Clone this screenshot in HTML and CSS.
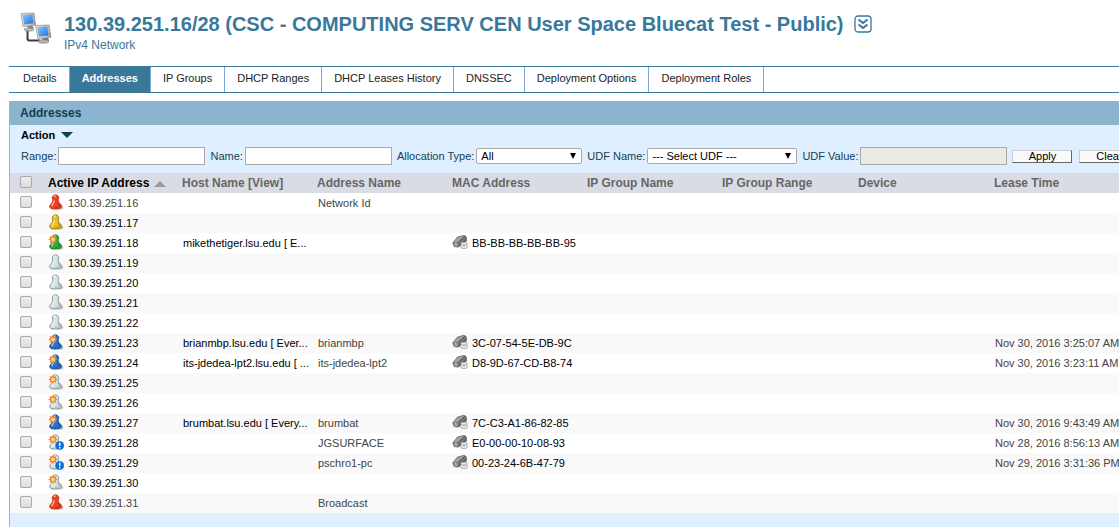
FILE: index.html
```
<!DOCTYPE html>
<html lang="en">
<head>
  <meta charset="UTF-8">
  <meta name="viewport" content="width=device-width, initial-scale=1.0">
  <title>130.39.251.16/28 - Addresses</title>
  <link rel="stylesheet" href="styles.css">
</head>
<body>
  <!-- Shared icons -->
  <svg class="sprite" width="0" height="0" aria-hidden="true">
    <defs>
      <linearGradient id="screen" x1="0" y1="0" x2="1" y2="1">
        <stop offset="0" stop-color="#8cc8fa"/>
        <stop offset="1" stop-color="#1b74dc"/>
      </linearGradient>
      <linearGradient id="metal" x1="0" y1="0" x2="1" y2="0">
        <stop offset="0" stop-color="#e4e4e4"/>
        <stop offset=".85" stop-color="#bbb"/>
        <stop offset="1" stop-color="#777"/>
      </linearGradient>
    </defs>
    <symbol id="pawn" viewBox="0 0 16 16">
      <path d="M3 15h11.500l.5-2-2.500-3.500z" fill="#000" opacity=".3"/>
      <path d="M7.500.8a3.200 3.200 0 0 1 2.600 5.100c.2 2 1.200 3.500 2.700 5.200 1 1.300.5 2.700-.8 3.200-2.900.9-6.100.9-9 0-1.300-.5-1.800-1.900-.8-3.200 1.500-1.700 2.500-3.200 2.700-5.200A3.200 3.200 0 0 1 7.500.8z" fill="currentColor" stroke-width=".9"/>
      <path d="M6 2.700q1-1.100 1.900-.4M6.300 6.300q-.3 3-2.700 5.700" fill="none" stroke="#fff" stroke-width="1.400" opacity=".65"/>
      <path d="M10 8.500q.6 2 1.800 3.700-1.500 1.200-4.800 1.200" fill="none" stroke="#000" stroke-width="1.200" opacity=".18"/>
    </symbol>
    <symbol id="spark" viewBox="0 0 16 16">
      <path d="M5 .8l1.100 1.900 2.200-.6-.6 2.200 1.900 1.100-1.900 1.100.6 2.200-2.200-.6L5 10 3.900 8.100l-2.200.6.6-2.200L.4 5.400l1.900-1.100-.6-2.200 2.200.6z" fill="#f27a35"/>
      <circle cx="5" cy="5.400" r="2" fill="#ffd95c"/>
    </symbol>
    <symbol id="alert" viewBox="0 0 16 16">
      <circle cx="11.700" cy="11.500" r="4.100" fill="#0870d8" stroke="#0758ab" stroke-width=".4"/>
      <path d="M11.700 8.800v3.200M11.700 13v1.400" stroke="#fff" stroke-width="1.500"/>
    </symbol>
    <symbol id="nic" viewBox="0 0 16 15">
      <path d="M.7 8.200L5.500 2.500 12 .8l2.500 1.700v4L6 12.700l-4-.7z" fill="#777" stroke="#5c5c5c" stroke-width=".6"/>
      <path d="M1 8l5-5 7-1.700L6.500 7.500z" fill="#a0a0a0"/>
      <path d="M6.500 7.500l7-6M6 12l8-7" stroke="#4c4c4c" stroke-width="1"/>
      <path d="M2.300 9l3.200.7M2.500 10.600l2.800.5" stroke="#ddd" stroke-width=".8"/>
      <rect x="9" y="7.800" width="6" height="6" rx="1" fill="#eee" stroke="#888" stroke-width=".7"/>
      <path d="M10.500 9.500l1.500 2.200 1.500-2.200" fill="none" stroke="#888" stroke-width=".8"/>
    </symbol>
  </svg>

  <header class="page-header">
    <svg class="network-icon" viewBox="0 0 32 32" aria-hidden="true">
      <path d="M7.500 17v9.500q0 2 2 2H20" fill="none" stroke="#3c3c3c" stroke-width="2"/>
      <path d="M7 14l5-1 2 3-5 2z" fill="#8b8b8b"/>
      <ellipse cx="9" cy="17.500" rx="5" ry="1.600" fill="#bbb" stroke="#777" stroke-width=".6"/>
      <path d="M1 1.500L14 1l1.500 12L3 14.500z" fill="url(#metal)" stroke="#8f8f8f" stroke-width=".7"/>
      <path d="M2.500 2.800L12.300 2.400l1 8.800-9.200 1.200z" fill="url(#screen)"/>
      <path d="M22 26l6-1 1 4-6 1z" fill="#777"/>
      <ellipse cx="23.500" cy="29.500" rx="5.500" ry="1.700" fill="#bbb" stroke="#666" stroke-width=".6"/>
      <path d="M15.500 13.500L29 13l2 12.300-13 1.500z" fill="url(#metal)" stroke="#8f8f8f" stroke-width=".7"/>
      <path d="M17.200 14.900l10-.4 1.400 8.900-9.600 1.200z" fill="url(#screen)"/>
    </svg>
    <div>
      <div class="title-row">
        <h1>130.39.251.16/28 (CSC - COMPUTING SERV CEN User Space Bluecat Test - Public)</h1>
        <button class="expand" type="button" aria-label="Show more">
          <svg viewBox="0 0 18 18" width="18" height="18">
            <rect x="1" y="1" width="16" height="16" rx="3" fill="#fff" stroke="#3a789a" stroke-width="1.300"/>
            <path d="M4.500 4.500L9 8l4.500-3.500M4.500 9.500L9 13l4.500-3.500" fill="none" stroke="#3a789a" stroke-width="2"/>
          </svg>
        </button>
      </div>
      <p class="subtitle">IPv4 Network</p>
    </div>
  </header>

  <nav class="tabs">
    <a href="#">Details</a>
    <a href="#" class="active">Addresses</a>
    <a href="#">IP Groups</a>
    <a href="#">DHCP Ranges</a>
    <a href="#">DHCP Leases History</a>
    <a href="#">DNSSEC</a>
    <a href="#">Deployment Options</a>
    <a href="#">Deployment Roles</a>
  </nav>

  <main class="panel">
    <h2>Addresses</h2>
    <button class="action" type="button">Action</button>

    <form class="filters">
      <div class="field">
        <label for="range">Range:</label>
        <input type="text" id="range">
      </div>
      <div class="field">
        <label for="name">Name:</label>
        <input type="text" id="name">
      </div>
      <div class="field">
        <label for="allocation">Allocation Type:</label>
        <span class="select allocation"><select id="allocation"><option>All</option></select></span>
      </div>
      <div class="field">
        <label for="udfName">UDF Name:</label>
        <span class="select udf"><select id="udfName"><option>--- Select UDF ---</option></select></span>
      </div>
      <div class="field">
        <label for="udfValue">UDF Value:</label>
        <input type="text" id="udfValue" disabled>
      </div>
      <div class="buttons">
        <button type="button">Apply</button>
        <button type="button">Clear</button>
      </div>
    </form>

    <table class="addresses">
      <colgroup>
        <col class="col-check">
        <col class="col-ip">
        <col class="col-data" span="4">
        <col class="col-wide" span="2">
        <col>
      </colgroup>
      <thead>
        <tr>
          <th><input type="checkbox" aria-label="Select all"></th>
          <th class="sorted">Active IP Address</th>
          <th>Host Name [View]</th>
          <th>Address Name</th>
          <th>MAC Address</th>
          <th>IP Group Name</th>
          <th>IP Group Range</th>
          <th>Device</th>
          <th>Lease Time</th>
        </tr>
      </thead>
      <tbody id="rows"></tbody>
    </table>
  </main>

  <script src="script.js"></script>
</body>
</html>
```
FILE: styles.css
```
* {
  box-sizing: border-box;
}

body {
  margin: 0;
  padding-left: 9px;
  min-height: 100vh;
  display: flex;
  flex-direction: column;
  overflow: hidden;
  background-color: #fff;
  color: #444;
  font-family: Arial, "Liberation Sans", sans-serif;
  font-size: 11px;
}

.sprite {
  position: absolute;
}

a {
  color: #000;
  text-decoration: none;
}

button,
input,
select {
  font-family: inherit;
  font-size: 11px;
  margin: 0;
}

.page-header {
  display: flex;
  gap: 12px;
  height: 66px;
  padding: 12px 0 0 11px;
  color: #3a789a;
}

.network-icon {
  width: 32px;
  height: 32px;
}

.title-row {
  display: flex;
  align-items: center;
  gap: 10px;
  height: 24px;
}

.page-header h1 {
  margin: 0;
  font-size: 20px;
  white-space: nowrap;
}

.expand {
  display: flex;
  padding: 0;
  border: none;
  background: none;
}

.subtitle {
  margin: 0;
  font-size: 12px;
  line-height: 18px;
}

.tabs {
  display: flex;
  padding-left: 2px;
  border-top: 1px solid #3a789a;
  border-bottom: 1px solid #3a789a;
}

.tabs a {
  padding: 0 12px;
  border-right: 1px solid #7da7d9;
  color: #222;
  line-height: 22px;
  height: 25px;
  white-space: nowrap;
}

.tabs .active {
  background-color: #3a789a;
  color: #fff;
  font-weight: bold;
}

.panel {
  flex: 1;
  margin-top: 8px;
  border-left: 1px solid #9bb3c9;
  background-color: #dfefff;
}

.panel h2 {
  margin: 0;
  padding-left: 10px;
  background-color: #8bb5cf;
  color: #123f54;
  font-size: 12px;
  line-height: 24px;
}

.action {
  display: flex;
  align-items: center;
  gap: 6px;
  height: 20px;
  padding: 0 11px;
  border: none;
  background: none;
  color: #000;
  font-weight: bold;
}

.action::after {
  content: "";
  border: 6px solid transparent;
  border-top-color: #123f54;
  border-bottom: none;
}

.filters {
  display: flex;
  align-items: center;
  gap: 5px;
  height: 28px;
  padding: 0 0 6px 11px;
  color: #123f54;
  white-space: nowrap;
}

.field {
  display: flex;
  align-items: center;
  gap: 2px;
}

.field input {
  width: 147px;
  height: 18px;
  border: 1px solid #a9a9a9;
  background-color: #fff;
}

.field input:disabled {
  background-color: #ebebe4;
}

.select {
  position: relative;
}

.select select {
  display: block;
  width: 100%;
  height: 16px;
  padding: 0 4px;
  border: 1px solid #a9a9a9;
  border-radius: 2px;
  appearance: none;
  background-color: #fff;
  color: #000;
}

.select::after {
  content: "";
  position: absolute;
  top: 5px;
  right: 6px;
  border: 3px solid transparent;
  border-top: 6px solid #000;
  border-bottom: none;
}

.allocation {
  width: 106px;
}

.udf {
  width: 150px;
}

.buttons {
  display: flex;
  gap: 7px;
}

.buttons button {
  width: 60px;
  height: 13px;
  padding: 0;
  border: 1px solid #666;
  border-top-color: #ccc;
  border-left-color: #ccc;
  background-color: #fafafa;
  color: #000;
  line-height: 11px;
}

.addresses {
  width: 100%;
  table-layout: fixed;
  border-collapse: collapse;
}

.col-check {
  width: 38px;
}

.col-ip {
  width: 134px;
}

.col-data {
  width: 135px;
}

.col-wide {
  width: 136px;
}

.addresses th,
.addresses td {
  height: 20px;
  padding: 0;
  text-align: left;
  white-space: nowrap;
}

.addresses td {
  padding-left: 1px;
}

.addresses td.with-icon {
  padding-left: 0;
}

.addresses th {
  background-color: #dadce5;
  color: #666;
  font-size: 12px;
}

.addresses th.sorted {
  color: #000;
}

.sorted::after {
  content: "";
  display: inline-block;
  margin-left: 5px;
  border: 6px solid transparent;
  border-top: none;
  border-bottom-color: #999;
}

.addresses tbody tr {
  background-color: #fff;
}

.addresses tbody tr:nth-child(even) {
  background-color: #f9f9f9;
}

.addresses th:first-child,
.addresses td:first-child {
  padding-left: 10px;
}

.addresses input {
  display: block;
  width: 12px;
  height: 12px;
  margin-bottom: 2px;
  border: 1px solid #aaa;
  border-radius: 2px;
  appearance: none;
  background: linear-gradient(#eee, #dcdcdc);
}

.cell {
  display: flex;
  align-items: center;
  gap: 4px;
}

.cell svg {
  width: 16px;
  height: 16px;
  margin-bottom: 2px;
}

.red {
  color: #f5401d;
  stroke: #b52a10;
}

.yellow {
  color: #efbf19;
  stroke: #94700b;
}

.green {
  color: #2fad3a;
  stroke: #176b20;
}

.blue {
  color: #2b70d0;
  stroke: #164a90;
}

.grey {
  color: #d5e3e5;
  stroke: #7e8e90;
}

.reserved {
  color: #444;
}
```
FILE: script.js
```
// suffix, pawn colour, badges, host name, address name, MAC, lease time
const rows = [
  [16, 'red', [], '', 'Network Id', '', ''],
  [17, 'yellow', [], '', '', '', ''],
  [18, 'green', ['spark'], 'mikethetiger.lsu.edu [ E...', '', 'BB-BB-BB-BB-BB-95', ''],
  [19, 'grey', [], '', '', '', ''],
  [20, 'grey', [], '', '', '', ''],
  [21, 'grey', [], '', '', '', ''],
  [22, 'grey', [], '', '', '', ''],
  [23, 'blue', ['spark'], 'brianmbp.lsu.edu [ Ever...', 'brianmbp', '3C-07-54-5E-DB-9C', 'Nov 30, 2016 3:25:07 AM'],
  [24, 'blue', ['spark'], 'its-jdedea-lpt2.lsu.edu [ ...', 'its-jdedea-lpt2', 'D8-9D-67-CD-B8-74', 'Nov 30, 2016 3:23:11 AM'],
  [25, 'grey', ['spark'], '', '', '', ''],
  [26, 'grey', ['spark'], '', '', '', ''],
  [27, 'blue', ['spark'], 'brumbat.lsu.edu [ Every...', 'brumbat', '7C-C3-A1-86-82-85', 'Nov 30, 2016 9:43:49 AM'],
  [28, 'grey', ['spark', 'alert'], '', 'JGSURFACE', 'E0-00-00-10-08-93', 'Nov 28, 2016 8:56:13 AM'],
  [29, 'grey', ['spark', 'alert'], '', 'pschro1-pc', '00-23-24-6B-47-79', 'Nov 29, 2016 3:31:36 PM'],
  [30, 'grey', ['spark'], '', '', '', ''],
  [31, 'red', [], '', 'Broadcast', '', '']
];

document.getElementById('rows').innerHTML = rows.map(([suffix, color, badges, host, name, mac, lease]) => {
  const ip = `130.39.251.${suffix}`;
  const address = color === 'red' ? `<span class="reserved">${ip}</span>` : `<a href="#">${ip}</a>`;
  const icons = badges.map(badge => `<use href="#${badge}"/>`).join('');
  return `
    <tr>
      <td><input type="checkbox" aria-label="Select ${ip}"></td>
      <td class="with-icon"><div class="cell">
        <svg viewBox="0 0 16 16"><use class="${color}" href="#pawn"/>${icons}</svg>${address}
      </div></td>
      <td>${host && `<a href="#">${host}</a>`}</td>
      <td>${name}</td>
      <td class="with-icon">${mac && `<div class="cell"><svg><use href="#nic"/></svg><a href="#">${mac}</a></div>`}</td>
      <td></td>
      <td></td>
      <td></td>
      <td>${lease}</td>
    </tr>`;
}).join('');
```
